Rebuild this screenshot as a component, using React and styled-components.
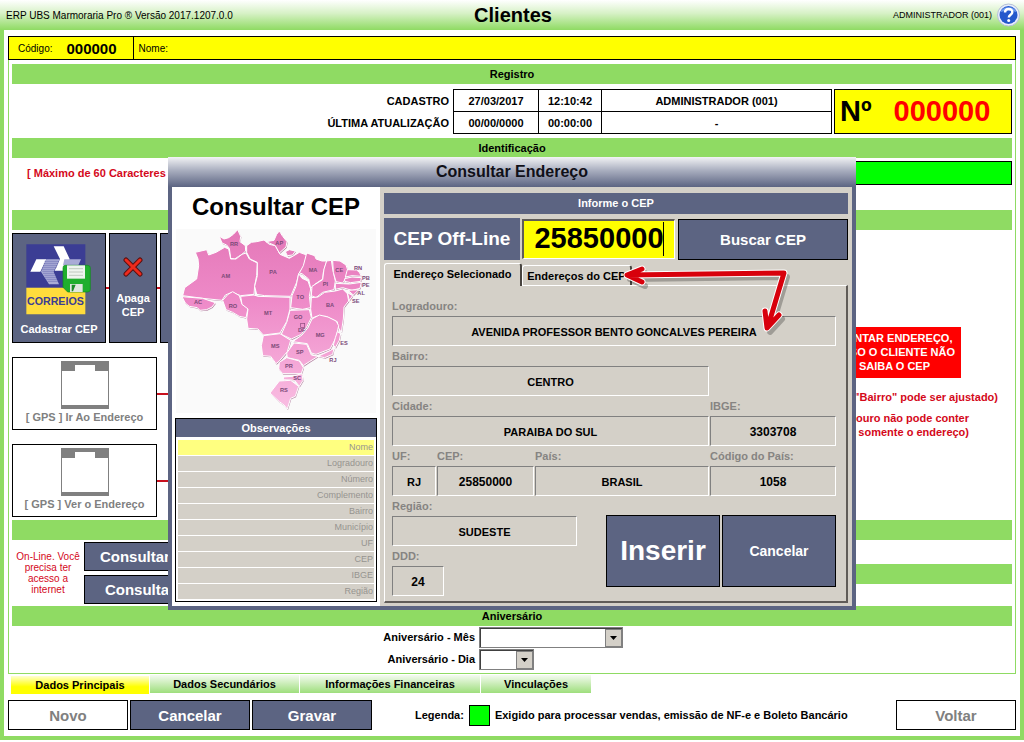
import React, { useState } from 'react';
import styled, { createGlobalStyle, css } from 'styled-components';

const green = '#8fdb63';
const slate = '#5c6482';
const beige = '#d4d0c8';

const GlobalStyle = createGlobalStyle`
    * {
        box-sizing: border-box;
    }
    body {
        margin: 0;
        background-color: #fff;
        color: #000;
        font-family: "Liberation Sans", Arial, sans-serif;
        font-size: 11px;
    }
    button, input, select {
        font-family: inherit;
        margin: 0;
        border-radius: 0;
    }
`;

const Screen = styled.div`
    position: relative;
    min-height: 740px;
    display: flex;
    flex-direction: column;
    border: 4px solid ${green};
    border-top: 0;
`;

const Header = styled.header`
    display: grid;
    grid-template-columns: 1fr auto 1fr;
    align-items: center;
    height: 30px;
    margin: 0 -4px;
    padding: 0 4px 0 6px;
    background: linear-gradient(#fff, #d6f1c5 45%, ${green});
    font-size: 10px;
`;

const Title = styled.h1`
    margin: 0;
    font-size: 20px;
`;

const User = styled.div`
    display: flex;
    align-items: center;
    justify-content: flex-end;
    gap: 5px;
    font-size: 9px;
`;

const HelpButton = styled.button`
    display: flex;
    padding: 0;
    border: 0;
    background: none;
    cursor: pointer;
`;

const Body = styled.main`
    flex: 1;
    display: flex;
    flex-direction: column;
    padding: 6px 4px;
`;

const Identity = styled.div`
    display: flex;
    height: 24px;
    border: 1px solid #000;
    background-color: #ff0;
    font-size: 10px;
`;

const IdentityCell = styled.div`
    display: flex;
    align-items: center;
    gap: 14px;
    padding-right: 16px;
    padding-left: ${({ $last }) => ($last ? '5px' : '9px')};
    border-right: ${({ $last }) => ($last ? '0' : '1px solid #000')};

    strong {
        font-size: 15px;
    }
`;

const Panel = styled.section`
    flex: 1;
    display: flex;
    flex-direction: column;
    padding: 4px 3px 3px;
    border: 1px solid ${green};
    border-top: 0;
`;

const Bar = styled.h2`
    height: 20px;
    margin: 0;
    background-color: ${green};
    font-size: 11px;
    line-height: 20px;
    text-align: center;
`;

const RegistryRow = styled.div`
    display: flex;
    justify-content: flex-end;
    gap: 2px;
    padding: 5px 0 4px;
`;

const Registry = styled.table`
    border-collapse: collapse;
    font-weight: bold;
    text-align: center;

    tr {
        height: 22px;
    }
    th {
        padding: 0 4px 0 0;
        text-align: right;
    }
    td {
        padding: 0;
        border: 1px solid #000;
    }
    td:nth-of-type(1) {
        width: 85px;
    }
    td:nth-of-type(2) {
        width: 63px;
    }
    td:nth-of-type(3) {
        width: 230px;
    }
`;

const NumberBox = styled.div`
    display: flex;
    align-items: center;
    gap: 22px;
    width: 178px;
    padding-left: 5px;
    border: 1px solid #000;
    background-color: #ff0;
    font-size: 29px;
    font-weight: bold;

    span {
        color: #f00;
    }
`;

const NameRow = styled.div`
    display: grid;
    grid-template-columns: 156px 1fr;
    gap: 4px;
    padding: 3px 0 25px;
`;

const RequiredInput = styled.input`
    height: 24px;
    border: 1px solid #000;
    background-color: #0f0;
`;

const RedNote = styled.p`
    margin: 0;
    color: #d4081a;
    font-size: ${({ $small }) => ($small ? '10px' : '11px')};
    font-weight: ${({ $small }) => ($small ? 'normal' : 'bold')};
    line-height: ${({ $small }) => ($small ? '11px' : '14px')};
    text-align: ${({ $small }) => ($small ? 'center' : 'left')};
`;

const MaxNote = styled(RedNote)`
    padding: 5px 0 0 15px;
    white-space: nowrap;
`;

const TwoColumns = styled.div`
    display: grid;
    grid-template-columns: 1fr 1fr;
`;

const Tools = styled.div`
    display: flex;
    flex-direction: column;
    gap: 14px;
    padding: 3px 0;
`;

const ToolLine = styled.div`
    display: flex;
    align-items: center;
`;

const Wire = styled.span`
    flex: ${({ $long }) => ($long ? '1' : '0 0 3px')};
    height: 2px;
    background-color: #c8101e;
`;

const Button = styled.button`
    padding: 0;
    border: 1px solid #000;
    background-color: ${slate};
    color: #fff;
    font-size: ${({ $size }) => $size || 15}px;
    font-weight: bold;
    cursor: pointer;

    ${({ disabled }) => disabled && css`
        background-color: #fff;
        color: #808080;
        cursor: default;
    `}
`;

const ToolButton = styled(Button)`
    display: flex;
    flex-direction: column;
    align-items: center;
    justify-content: ${({ $center }) => ($center ? 'center' : 'flex-end')};
    gap: ${({ $center }) => ($center ? '14px' : '7px')};
    width: ${({ $width }) => $width}px;
    height: 110px;
    padding-bottom: ${({ $center }) => ($center ? '0' : '6px')};
    font-size: 11px;
    line-height: 14px;
`;

const GpsButton = styled(Button)`
    display: flex;
    flex-direction: column;
    align-items: center;
    gap: 2px;
    width: 145px;
    height: 73px;
    padding-top: 3px;
    font-size: 11px;
`;

const Notes = styled.div`
    display: flex;
    flex-direction: column;
    align-items: flex-end;
    padding: 97px 14px 0 0;
`;

const Alert = styled.div`
    width: 133px;
    margin-right: 37px;
    margin-bottom: 12px;
    padding: 4px 0 5px;
    background-color: #f00;
    color: #fff;
    font-weight: bold;
    line-height: 14px;
    text-align: center;
`;

const LogradouroNote = styled(RedNote)`
    padding: 7px 29px 0 0;
    text-align: right;
`;

const OnlineRow = styled.div`
    display: grid;
    grid-template-columns: 72px 146px;
    align-items: center;
    padding: 2px 0;
`;

const OnlineButtons = styled.div`
    display: grid;
    gap: 4px;

    button {
        height: 29px;
    }
`;

const SideBars = styled.div`
    display: grid;
    gap: 24px;
    align-content: start;
`;

const SelectLine = styled.div`
    display: flex;
    align-items: center;
    gap: 4px;
    height: 22px;

    label {
        width: 46.3%;
        font-weight: bold;
        font-size: 11px;
        text-align: right;
    }
`;

const SelectFrame = styled.div`
    display: flex;
    width: ${({ $width }) => $width}px;
    height: 21px;
    border: 1px solid #808080;
    box-shadow: inset 1px 1px #404040;

    select {
        flex: 1;
        min-width: 0;
        border: 0;
        background: none;
        appearance: none;
    }
    span {
        display: grid;
        place-items: center;
        width: 17px;
        margin: 1px 0 0;
        border: 1px solid #808080;
        background-color: ${beige};
    }
`;

const Tabs = styled.nav`
    display: flex;
    gap: 1px;
    padding: 1px 3px 0;
`;

const Tab = styled.button`
    height: 18px;
    padding: 0;
    border: 0;
    width: ${({ $width }) => $width}px;
    margin-top: ${({ $active }) => ($active ? '1px' : '0')};
    background: ${({ $active }) => ($active
        ? 'linear-gradient(#ffffd0, #ff0 60%)'
        : 'linear-gradient(#f4fbf0, #9ede7c)')};
    font-size: 11px;
    font-weight: bold;
    cursor: pointer;
`;

const Footer = styled.footer`
    display: flex;
    align-items: center;
    gap: 2px;
    padding-top: 6px;

    > button {
        width: 120px;
        height: 30px;
    }
    > button:last-child {
        margin-left: auto;
    }
`;

const Legend = styled.div`
    display: flex;
    align-items: center;
    gap: 5px;
    margin-left: 41px;
    font-weight: bold;

    i {
        width: 21px;
        height: 21px;
        border: 1px solid #000;
        background-color: #0f0;
    }
`;

/* Dialog */

const Overlay = styled.div`
    position: absolute;
    top: 157px;
    left: -4px;
    right: -4px;
    display: flex;
    justify-content: center;
`;

const Dialog = styled.section`
    position: relative;
    width: 688px;
    max-width: 100%;
    border: 4px solid ${slate};
    border-top: 0;
    background-color: ${beige};
`;

const DialogTitle = styled.h2`
    height: 30px;
    margin: 0 -4px;
    background: linear-gradient(#f2f3f5, #a9aebf 45%, ${slate});
    color: #101018;
    font-size: 16px;
    line-height: 29px;
    text-align: center;
`;

const DialogBody = styled.div`
    display: grid;
    grid-template-columns: 208px 1fr;
`;

const MapSide = styled.aside`
    display: flex;
    flex-direction: column;
    padding: 0 3px 4px;
    background-color: #fff;

    h3 {
        margin: 0;
        font-size: 24px;
        line-height: 40px;
        text-align: center;
    }
    svg {
        display: block;
        margin: 2px auto 5px;
    }
`;

const Observations = styled.div`
    border: 1px solid #000;

    h4 {
        margin: 0;
        background-color: ${slate};
        color: #fff;
        font-size: 11px;
        line-height: 18px;
        text-align: center;
    }
    ul {
        display: grid;
        gap: 1px;
        margin: 0;
        padding: 3px 2px 2px;
        list-style: none;
    }
`;

const ObservationItem = styled.li`
    height: 15px;
    padding-right: 1px;
    background-color: ${({ $active }) => ($active ? '#ffff80' : beige)};
    color: #969490;
    font-size: 9px;
    line-height: 15px;
    text-align: right;
`;

const FormSide = styled.form`
    padding: 6px 4px 3px;
`;

const FormBar = styled.div`
    height: 21px;
    background-color: ${slate};
    color: #fff;
    font-weight: bold;
    line-height: 20px;
    text-align: center;
`;

const SearchRow = styled.div`
    display: grid;
    grid-template-columns: 136px 153px 1fr;
    gap: 2px;
    height: 42px;
    margin: 4px 0 3px;

    button {
        margin: 1px 0 0 1px;
    }
`;

const CepLabel = styled.label`
    background-color: ${slate};
    color: #fff;
    font-size: 19px;
    font-weight: bold;
    line-height: 42px;
    text-align: center;
`;

const CepInput = styled.input`
    width: 100%;
    height: 40px;
    margin-top: 1px;
    padding: 0 0 2px;
    border: 1px solid #fff;
    border-top: 2px solid #605c58;
    border-left: 2px solid #605c58;
    background: linear-gradient(#000, #000) 139px 1px / 1px 34px no-repeat #ff0;
    font-size: 29px;
    font-weight: bold;
    text-align: center;
    outline: 0;
`;

const DialogTabs = styled.div`
    display: flex;
    align-items: flex-end;
    height: 22px;
`;

const DialogTab = styled.button`
    height: ${({ $active }) => ($active ? '23px' : '20px')};
    width: ${({ $width }) => $width}px;
    margin-bottom: ${({ $active }) => ($active ? '-1px' : '0')};
    padding: ${({ $active }) => ($active ? '0 0 3px' : '0')};
    border: 1px solid #fff;
    border-right: 2px solid #484440;
    border-bottom: 0;
    border-radius: 3px 3px 0 0;
    background-color: ${beige};
    font-size: 11px;
    font-weight: bold;
    white-space: nowrap;
    z-index: ${({ $active }) => ($active ? 1 : 0)};
`;

const TabPanel = styled.div`
    padding: 13px 10px 7px 7px;
    border: 1px solid #fff;
    border-right: 2px solid #605c58;
    border-bottom: 2px solid #605c58;
`;

const FieldRow = styled.div`
    display: grid;
    grid-template-columns: ${({ $columns }) => $columns};
    gap: 1px;
    height: 50px;
`;

const FieldBox = styled.div`
    display: flex;
    flex-direction: column;

    label {
        height: 17px;
        color: #868482;
        font-size: 11px;
        font-weight: bold;
        line-height: 15px;
    }
    input {
        width: 100%;
        height: 30px;
        padding: 2px 0 0;
        border: 1px solid #fff;
        border-top-color: #808080;
        border-left-color: #808080;
        background: none;
        color: #000;
        font-size: ${({ $numeric }) => ($numeric ? '12px' : '11px')};
        font-weight: bold;
        text-align: center;
        outline: 0;
    }
`;

const LastRows = styled.div`
    display: grid;
    grid-template-columns: 185px 1fr;
    height: 95px;
`;

const Actions = styled.div`
    display: grid;
    grid-template-columns: 114px 114px;
    gap: 2px;
    justify-content: end;
    padding-top: 16px;

    button {
        height: 72px;
    }
`;

const Arrows = styled.svg`
    position: absolute;
    top: 105px;
    left: 447px;
    pointer-events: none;
`;

const states = [
    ['RR', 182, 200, 'M150 172 L164 180 L178 176 L192 166 L205 152 L214 172 L212 188 L228 200 L229 216 L218 226 L208 232 L196 240 L184 238 L180 208 L172 198 L158 192Z'],
    ['AM', 156, 298, 'M78 220 L112 212 L118 228 L140 220 L166 205 L178 210 L184 240 L200 240 L218 226 L230 222 L240 240 L264 252 L262 290 L256 320 L254 346 L214 350 L188 340 L168 348 L158 364 L100 358 L40 350 L46 326 L82 300 L88 260 L86 240Z'],
    ['AC', 74, 376, 'M38 353 L100 358 L138 371 L128 384 L112 392 L92 394 L84 386 L60 382 L48 372Z'],
    ['RO', 178, 386, 'M160 364 L176 346 L190 338 L210 350 L218 376 L236 388 L230 416 L210 412 L190 400 L170 392Z'],
    ['PA', 300, 286, 'M232 200 L246 190 L262 188 L284 183 L300 196 L318 200 L332 226 L360 238 L390 220 L412 228 L404 262 L388 284 L382 310 L364 352 L286 350 L262 346 L256 322 L264 290 L264 250 L242 240 L232 220Z'],
    ['AP', 318, 198, 'M290 188 L314 184 L322 166 L330 156 L340 172 L353 188 L350 204 L330 222 L318 200Z'],
    ['', 0, 0, 'M348 218 L360 212 L378 216 L370 228 L354 230Z'],
    ['MA', 418, 280, 'M412 222 L436 230 L440 240 L458 246 L472 246 L462 280 L460 300 L436 316 L424 328 L418 300 L398 284 L390 282 L402 260Z'],
    ['PI', 460, 320, 'M472 246 L486 244 L490 270 L498 306 L494 332 L460 340 L440 356 L426 350 L428 322 L460 302 L464 270Z'],
    ['CE', 498, 278, 'M490 244 L512 246 L530 258 L536 276 L528 300 L520 312 L500 308 L492 280Z'],
    ['RN', 554, 272, 'M534 272 L562 273 L570 280 L576 292 L548 290 L528 294Z'],
    ['PB', 578, 302, 'M526 299 L548 294 L576 296 L574 307 L544 311 L526 307Z'],
    ['PE', 578, 325, 'M498 313 L540 315 L576 310 L572 328 L548 334 L520 326 L498 331Z'],
    ['AL', 564, 348, 'M536 334 L568 332 L552 348Z'],
    ['SE', 548, 371, 'M534 341 L550 350 L540 364Z'],
    ['BA', 470, 383, 'M426 356 L446 354 L466 340 L498 336 L520 330 L534 344 L538 366 L524 384 L522 420 L516 460 L506 444 L504 428 L470 412 L440 412 L428 418 L424 390Z'],
    ['TO', 381, 360, 'M388 284 L398 298 L416 306 L424 330 L420 352 L424 386 L400 391 L364 386 L368 350 L380 322Z'],
    ['GO', 373, 421, 'M362 394 L420 392 L426 416 L412 444 L396 466 L366 480 L336 466 L352 430Z'],
    ['MT', 284, 409, 'M214 352 L254 348 L266 352 L362 355 L362 390 L352 428 L332 462 L282 468 L266 450 L236 448 L232 420 L236 390 L218 376Z'],
    ['MG', 439, 475, 'M428 420 L450 408 L476 414 L500 426 L508 440 L500 476 L482 510 L440 526 L426 522 L414 494 L370 488 L398 468 L416 446Z'],
    ['ES', 513, 497, 'M504 458 L514 464 L510 484 L498 506 L492 498 L498 476Z'],
    ['RJ', 480, 549, 'M446 532 L484 514 L494 508 L490 526 L466 536Z'],
    ['MS', 305, 508, 'M282 470 L332 464 L364 484 L354 518 L330 546 L320 554 L304 532 L280 530 L276 500Z'],
    ['SP', 380, 526, 'M352 522 L374 492 L412 496 L426 528 L446 532 L420 548 L402 560 L390 544 L354 536Z'],
    ['PR', 347, 567, 'M330 550 L352 536 L390 546 L402 566 L396 584 L340 584 L328 570Z'],
    ['SC', 372, 603, 'M342 594 L368 592 L398 584 L401 604 L390 622 L376 604 L342 602Z'],
    ['RS', 332, 639, 'M302 642 L330 606 L364 604 L388 622 L378 652 L364 658 L354 690 L344 678 L330 668Z'],
];

const BrazilMap = () => (
    <svg width="200" height="184" viewBox="20 150 600 552" role="img" aria-label="Mapa do Brasil">
        <defs>
            <linearGradient id="pink" gradientUnits="userSpaceOnUse" x1="0" y1="150" x2="0" y2="690">
                <stop offset="0" stopColor="#e478b8" />
                <stop offset="0.4" stopColor="#ee8ac8" />
                <stop offset="1" stopColor="#f9bde2" />
            </linearGradient>
        </defs>
        <rect x="20" y="150" width="600" height="552" fill="#fafafa" />
        <g transform="translate(2 3)" fill="#b98aa8">
            {states.map(([uf, , , d]) => <path key={uf} d={d} />)}
        </g>
        <g fill="url(#pink)" stroke="#fff" strokeWidth="3" strokeLinejoin="round">
            {states.map(([uf, , , d]) => <path key={uf} d={d} />)}
        </g>
        <rect x="394" y="433" width="12" height="12" fill="none" stroke="#8a4a7c" strokeWidth="2" />
        <g fill="#7c4a78" fontSize="17" fontWeight="bold">
            {states.map(([uf, x, y]) => <text key={uf} x={x} y={y}>{uf}</text>)}
            <text x="386" y="459">DF</text>
        </g>
    </svg>
);

const CorreiosIcon = () => (
    <svg width="66" height="71" viewBox="85 72 198 213">
        <path fill="#3b3d94" d="M86 73h177v130H86z" />
        <path fill="#ffdc3c" d="M86 203h177v80H86z" />
        <path fill="#fff" d="M168 79h30l18 38-15 35h-30l16-35zM116 118h30l-18 37H98z" />
        <path fill="#a9abd6" d="M146 118h40l-18 37 16 38h-30l-24-38zM200 118h50l-8 18h-46z" />
        <path stroke="#3b3d94" strokeWidth="1" d="M140 124h44M138 130h44M136 136h44M134 142h44M132 148h40M134 154h36M136 160h36M140 166h34M142 172h34M146 178h34M150 184h32" />
        <text x="88" y="255" fill="#3b3d94" fontSize="32" fontWeight="bold">CORREIOS</text>
        <path fill="#1fae2e" stroke="#118a1e" strokeWidth="2" d="M202 136h68q8 0 8 8v64q0 8-8 8h-60l-14-14v-58q0-8 6-8z" />
        <path fill="#eef4ee" d="M208 136h54v40h-54z" />
        <path stroke="#a9b6a9" strokeWidth="2" d="M214 146h42M214 156h42M214 166h42" />
        <path fill="#dfe6df" d="M217 192h38v24h-38z" />
        <path fill="#1b8a28" d="M222 194h12l-8 20h-4z" />
    </svg>
);

const DeleteIcon = () => (
    <svg width="20" height="20" viewBox="0 0 20 20">
        <path d="M3 3L17 17M17 3L3 17" stroke="#5a1010" strokeWidth="5" strokeLinecap="round" />
        <path d="M3 3L17 17M17 3L3 17" stroke="#ee2a1c" strokeWidth="3" strokeLinecap="round" />
    </svg>
);

const GpsIcon = () => (
    <svg width="48" height="48" viewBox="0 0 48 48">
        <path fill="#808080" fillRule="evenodd" d="M0 0h48v48H0zM1 10v34h46V10H34V4H14v6z" />
    </svg>
);

const HelpIcon = () => (
    <svg width="23" height="24" viewBox="0 0 23 24">
        <circle cx="11.5" cy="12" r="11" fill="#e9eefb" stroke="#b4bfd8" />
        <circle cx="11.5" cy="12" r="9" fill="#2458cc" />
        <path fill="#6f9bf0" d="M3.5 9a8.5 7 0 0 1 16 0q-8-3-16 0z" />
        <path d="M8 9.5q0-3.5 3.7-3.5t3.6 3.2c0 2.4-3.5 2.6-3.5 5.2" fill="none" stroke="#fff" strokeWidth="2.4" />
        <circle cx="11.7" cy="17.5" r="1.5" fill="#fff" />
    </svg>
);

const DownIcon = () => (
    <svg width="7" height="4" viewBox="0 0 7 4">
        <path d="M0 0h7L3.5 4z" />
    </svg>
);

const arrowPath = 'M8 13L165 11L150 61M23 7L8 13L23 20M146 49L148 66L160 53';

const ArrowMarks = () => (
    <Arrows width="190" height="90" viewBox="0 0 190 90" fill="none" strokeLinejoin="round" strokeLinecap="round">
        <path d={arrowPath} transform="translate(3 4)" stroke="#000" strokeOpacity="0.25" strokeWidth="6" />
        <path d={arrowPath} stroke="#fff" strokeWidth="7" />
        <path d={arrowPath} stroke="#d8000c" strokeWidth="5" />
    </Arrows>
);

const observations = ['Nome', 'Logradouro', 'Número', 'Complemento', 'Bairro', 'Município', 'UF', 'CEP', 'IBGE', 'Região'];

const Field = ({ id, label, value, numeric }) => (
    <FieldBox $numeric={numeric}>
        <label htmlFor={id}>{label}</label>
        <input id={id} value={value} readOnly />
    </FieldBox>
);

const AddressDialog = () => {
    const [cep, setCep] = useState('25850000');

    return (
        <Overlay>
            <Dialog role="dialog" aria-label="Consultar Endereço">
                <DialogTitle>Consultar Endereço</DialogTitle>
                <DialogBody>
                    <MapSide>
                        <h3>Consultar CEP</h3>
                        <BrazilMap />
                        <Observations>
                            <h4>Observações</h4>
                            <ul>
                                {observations.map((item, i) => (
                                    <ObservationItem key={item} $active={i === 0}>{item}</ObservationItem>
                                ))}
                            </ul>
                        </Observations>
                    </MapSide>
                    <FormSide onSubmit={(e) => e.preventDefault()}>
                        <FormBar>Informe o CEP</FormBar>
                        <SearchRow>
                            <CepLabel htmlFor="cep">CEP Off-Line</CepLabel>
                            <CepInput id="cep" value={cep} onChange={(e) => setCep(e.target.value)} />
                            <Button type="submit">Buscar CEP</Button>
                        </SearchRow>
                        <DialogTabs>
                            <DialogTab type="button" $active $width={138}>Endereço Selecionado</DialogTab>
                            <DialogTab type="button" $width={110}>Endereços do CEP</DialogTab>
                        </DialogTabs>
                        <TabPanel>
                            <FieldRow $columns="1fr">
                                <Field id="logradouro" label="Logradouro:" value="AVENIDA PROFESSOR BENTO GONCALVES PEREIRA" />
                            </FieldRow>
                            <FieldRow $columns="1fr 126px">
                                <Field id="bairro" label="Bairro:" value="CENTRO" />
                            </FieldRow>
                            <FieldRow $columns="1fr 126px">
                                <Field id="cidade" label="Cidade:" value="PARAIBA DO SUL" />
                                <Field id="ibge" label="IBGE:" value="3303708" numeric />
                            </FieldRow>
                            <FieldRow $columns="44px 97px 1fr 126px">
                                <Field id="uf" label="UF:" value="RJ" />
                                <Field id="cepAtual" label="CEP:" value="25850000" numeric />
                                <Field id="pais" label="País:" value="BRASIL" />
                                <Field id="codigoPais" label="Código do País:" value="1058" numeric />
                            </FieldRow>
                            <LastRows>
                                <div>
                                    <FieldRow $columns="1fr">
                                        <Field id="regiao" label="Região:" value="SUDESTE" />
                                    </FieldRow>
                                    <FieldRow $columns="52px">
                                        <Field id="ddd" label="DDD:" value="24" numeric />
                                    </FieldRow>
                                </div>
                                <Actions>
                                    <Button type="button" $size={28}>Inserir</Button>
                                    <Button type="button" $size={14}>Cancelar</Button>
                                </Actions>
                            </LastRows>
                        </TabPanel>
                    </FormSide>
                </DialogBody>
                <ArrowMarks />
            </Dialog>
        </Overlay>
    );
};

const App = () => (
    <>
        <GlobalStyle />
        <Screen>
            <Header>
                <span>ERP UBS Marmoraria Pro ® Versão 2017.1207.0.0</span>
                <Title>Clientes</Title>
                <User>
                    ADMINISTRADOR (001)
                    <HelpButton aria-label="Ajuda"><HelpIcon /></HelpButton>
                </User>
            </Header>
            <Body>
                <Identity>
                    <IdentityCell>Código: <strong>000000</strong></IdentityCell>
                    <IdentityCell $last>Nome:</IdentityCell>
                </Identity>
                <Panel>
                    <Bar>Registro</Bar>
                    <RegistryRow>
                        <Registry>
                            <tbody>
                                <tr>
                                    <th scope="row">CADASTRO</th>
                                    <td>27/03/2017</td>
                                    <td>12:10:42</td>
                                    <td>ADMINISTRADOR (001)</td>
                                </tr>
                                <tr>
                                    <th scope="row">ÚLTIMA ATUALIZAÇÃO</th>
                                    <td>00/00/0000</td>
                                    <td>00:00:00</td>
                                    <td>-</td>
                                </tr>
                            </tbody>
                        </Registry>
                        <NumberBox>Nº <span>000000</span></NumberBox>
                    </RegistryRow>
                    <Bar>Identificação</Bar>
                    <NameRow>
                        <MaxNote>[ Máximo de 60 Caracteres ]</MaxNote>
                        <RequiredInput aria-label="Nome" />
                    </NameRow>
                    <Bar />
                    <TwoColumns>
                        <Tools>
                            <ToolLine>
                                <ToolButton $width={94}><CorreiosIcon />Cadastrar CEP</ToolButton>
                                <Wire />
                                <ToolButton $width={48} $center><DeleteIcon />Apaga CEP</ToolButton>
                                <Wire />
                                <ToolButton $width={94}>Consultar CEP</ToolButton>
                            </ToolLine>
                            <ToolLine>
                                <GpsButton disabled><GpsIcon />[ GPS ] Ir Ao Endereço</GpsButton>
                                <Wire $long />
                            </ToolLine>
                            <ToolLine>
                                <GpsButton disabled><GpsIcon />[ GPS ] Ver o Endereço</GpsButton>
                                <Wire $long />
                            </ToolLine>
                        </Tools>
                        <Notes>
                            <Alert>MONTAR ENDEREÇO, CASO O CLIENTE NÃO SAIBA O CEP</Alert>
                            <RedNote>("Bairro" pode ser ajustado)</RedNote>
                            <LogradouroNote>(Logradouro não pode conter<br />número, somente o endereço)</LogradouroNote>
                        </Notes>
                    </TwoColumns>
                    <TwoColumns>
                        <div>
                            <Bar />
                            <OnlineRow>
                                <RedNote $small>On-Line. Você precisa ter acesso a internet</RedNote>
                                <OnlineButtons>
                                    <Button>Consultar CNPJ</Button>
                                    <Button>Consultar CPF</Button>
                                </OnlineButtons>
                            </OnlineRow>
                        </div>
                        <SideBars>
                            <Bar />
                            <Bar />
                        </SideBars>
                    </TwoColumns>
                    <Bar>Aniversário</Bar>
                    <SelectLine>
                        <label htmlFor="mes">Aniversário - Mês</label>
                        <SelectFrame $width={144}>
                            <select id="mes" />
                            <span><DownIcon /></span>
                        </SelectFrame>
                    </SelectLine>
                    <SelectLine>
                        <label htmlFor="dia">Aniversário - Dia</label>
                        <SelectFrame $width={55}>
                            <select id="dia" />
                            <span><DownIcon /></span>
                        </SelectFrame>
                    </SelectLine>
                </Panel>
                <Tabs>
                    <Tab $active $width={138}>Dados Principais</Tab>
                    <Tab $width={149}>Dados Secundários</Tab>
                    <Tab $width={180}>Informações Financeiras</Tab>
                    <Tab $width={110}>Vinculações</Tab>
                </Tabs>
                <Footer>
                    <Button disabled>Novo</Button>
                    <Button>Cancelar</Button>
                    <Button>Gravar</Button>
                    <Legend>
                        Legenda: <i /> Exigido para processar vendas, emissão de NF-e e Boleto Bancário
                    </Legend>
                    <Button disabled>Voltar</Button>
                </Footer>
            </Body>
            <AddressDialog />
        </Screen>
    </>
);

export default App;
